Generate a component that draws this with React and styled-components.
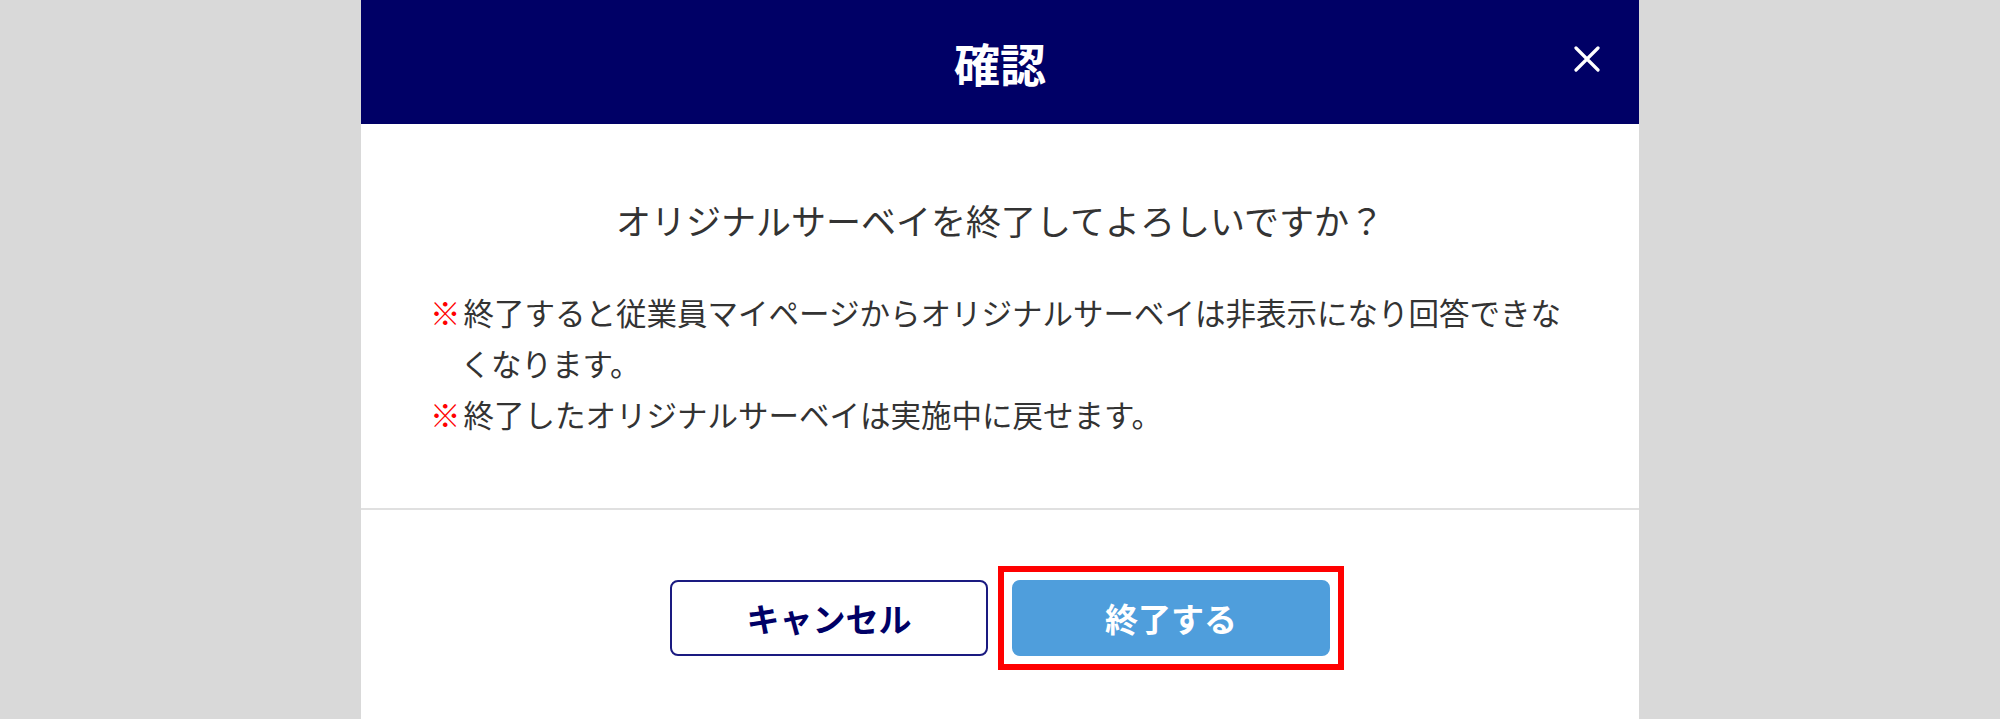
import React from "react";
import styled, { createGlobalStyle } from "styled-components";

const GlobalStyle = createGlobalStyle`
  html, body {
    margin: 0;
    padding: 0;
    background: #d9d9d9;
    height: 719px;
    overflow: hidden;
  }
  * {
    box-sizing: border-box;
  }
`;

const Modal = styled.div`
  width: 1278px;
  height: 719px;
  margin: 0 auto;
  background: #ffffff;
  font-family: "Noto Sans CJK JP", "Noto Sans", sans-serif;
  display: flex;
  flex-direction: column;
`;

const Header = styled.header`
  position: relative;
  height: 124px;
  background: #000066;
  display: flex;
  align-items: center;
  justify-content: center;
`;

const Title = styled.h2`
  margin: 0;
  color: #ffffff;
  font-size: 46px;
  font-weight: 700;
  line-height: 1;
`;

const CloseButton = styled.button`
  all: unset;
  position: absolute;
  right: 39px;
  top: 46px;
  width: 26px;
  height: 26px;
  cursor: pointer;
  display: flex;
`;

const Body = styled.div`
  padding: 70px 69px 68px;
  border-bottom: 2px solid #e0e0e0;
`;

const Question = styled.p`
  margin: 0;
  text-align: center;
  color: #333333;
  font-size: 35px;
  line-height: 52px;
`;

const Notes = styled.ul`
  list-style: none;
  margin: 41px 0 0;
  padding: 0;
`;

const Note = styled.li`
  color: #333333;
  font-size: 30.5px;
  line-height: 51px;
  padding-left: 1em;
  text-indent: -1em;
`;

const Mark = styled.span`
  color: #ff0000;
  margin-right: 3px;
`;

const Footer = styled.div`
  flex: 1;
  display: flex;
  justify-content: center;
  align-items: flex-start;
  gap: 24px;
  padding-top: 70px;
`;

const Button = styled.button`
  all: unset;
  box-sizing: border-box;
  width: 318px;
  height: 76px;
  border-radius: 8px;
  display: flex;
  align-items: center;
  justify-content: center;
  font-family: "Noto Sans CJK JP", "Noto Sans", sans-serif;
  font-size: 33px;
  font-weight: 700;
  cursor: pointer;
  background: ${(props) => (props.primary ? "#4f9edc" : "#ffffff")};
  color: ${(props) => (props.primary ? "#ffffff" : "#000066")};
  border: 2px solid ${(props) => (props.primary ? "#4f9edc" : "#1a1a80")};
`;

const Highlight = styled.span`
  display: flex;
  margin: -14px;
  padding: 8px;
  border: 6px solid #ff0000;
`;

const CloseIcon = () => (
  <svg width="26" height="26" viewBox="0 0 26 26">
    <path
      d="M2 2 L24 24 M24 2 L2 24"
      stroke="#ffffff"
      strokeWidth="3.2"
      strokeLinecap="round"
    />
  </svg>
);

const notes = [
  "終了すると従業員マイページからオリジナルサーベイは非表示になり回答できなくなります。",
  "終了したオリジナルサーベイは実施中に戻せます。",
];

const App = () => (
  <>
    <GlobalStyle />
    <Modal>
      <Header>
        <Title>確認</Title>
        <CloseButton aria-label="閉じる">
          <CloseIcon />
        </CloseButton>
      </Header>
      <Body>
        <Question>オリジナルサーベイを終了してよろしいですか？</Question>
        <Notes>
          {notes.map((text, index) => (
            <Note key={index}>
              <Mark>※</Mark>
              {text}
            </Note>
          ))}
        </Notes>
      </Body>
      <Footer>
        <Button>キャンセル</Button>
        <Highlight>
          <Button primary>終了する</Button>
        </Highlight>
      </Footer>
    </Modal>
  </>
);

export default App;
